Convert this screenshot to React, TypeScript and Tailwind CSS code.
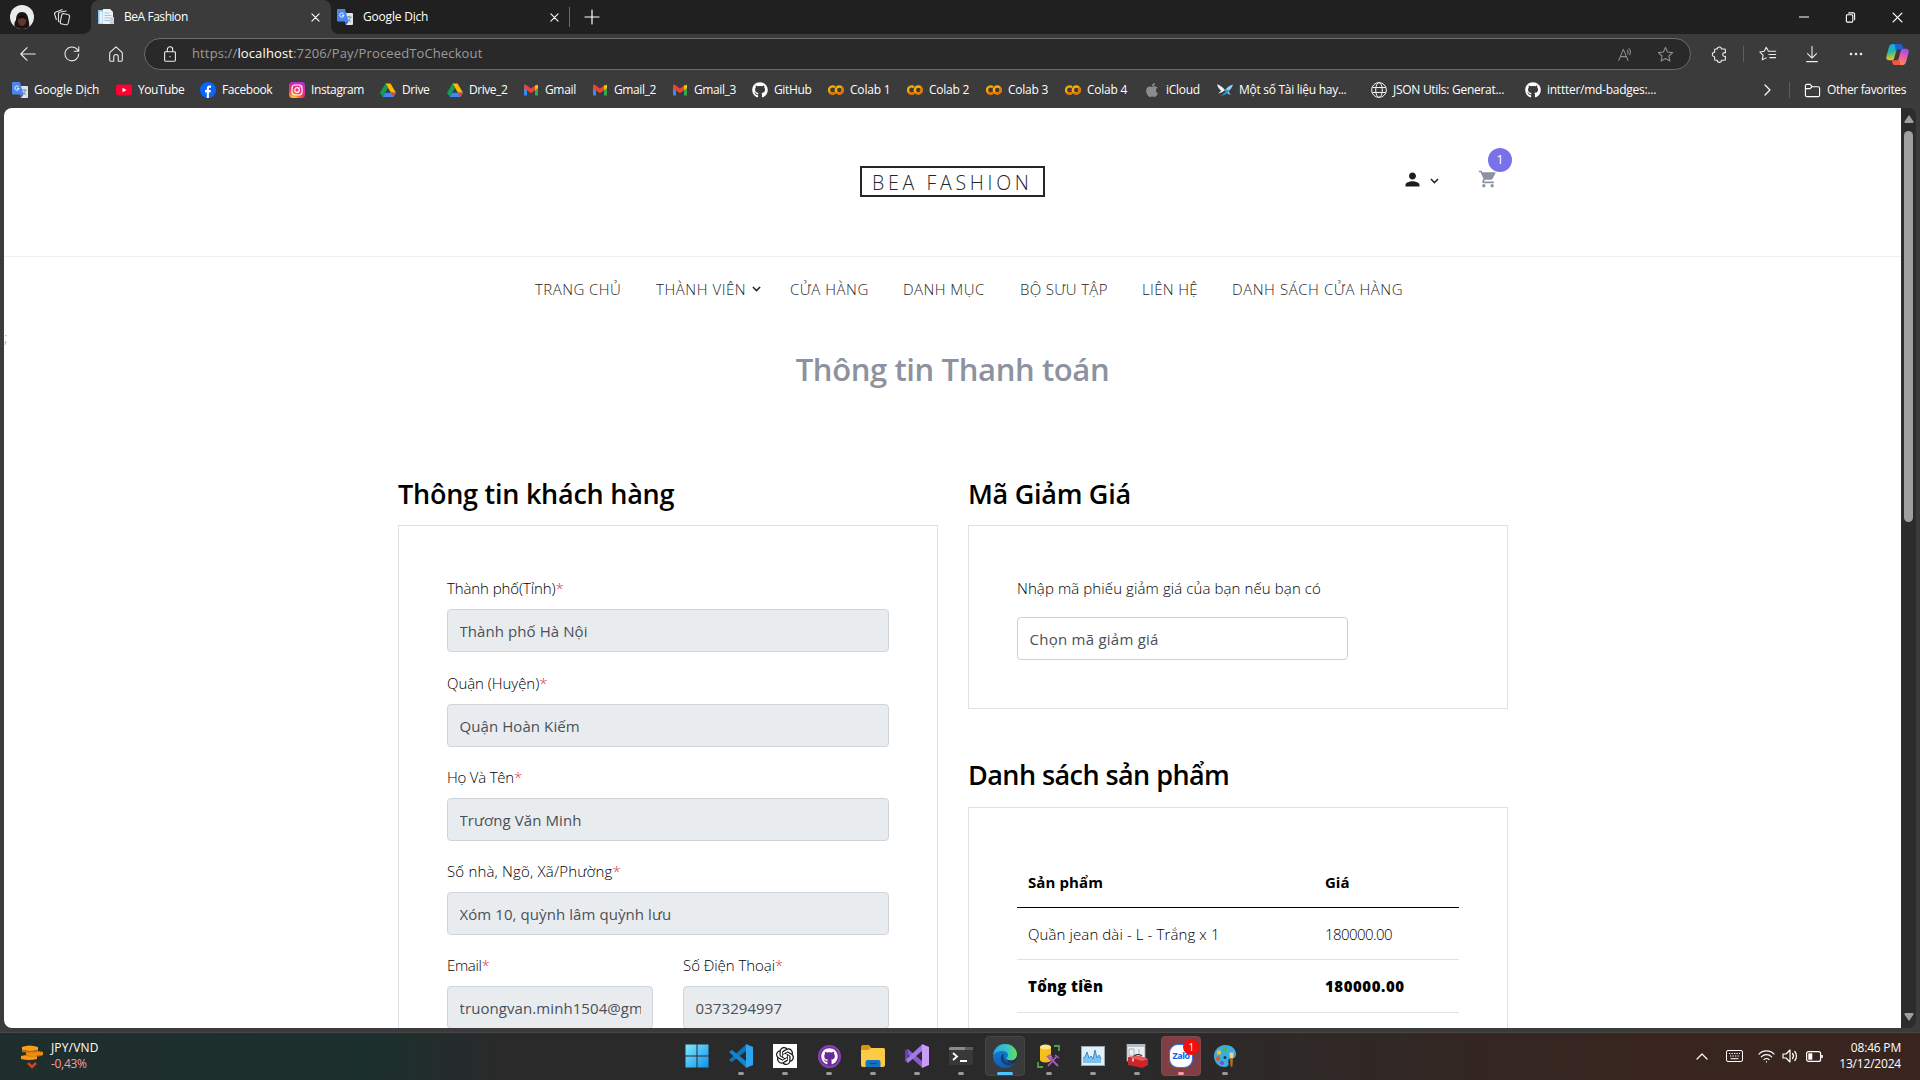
import React from "react";
import { FaApple, FaGithub } from "react-icons/fa";
import { SiOpenai } from "react-icons/si";
import { MdPerson, MdShoppingCart } from "react-icons/md";

/* ---------- small brand icons ---------- */

function TranslateIcon() {
  return (
    <svg viewBox="0 0 16 16" className="size-4 shrink-0">
      <path d="M6 4h9a1 1 0 0 1 1 1v10a1 1 0 0 1-1 1H9z" fill="#dfe3ea" />
      <path d="M9.5 8h5M12 7v1M10.5 12.500c1.500-1 2.500-2.500 3-4.500M10.500 9.500c.8 1.500 2 2.500 3.500 3" stroke="#5f7391" strokeWidth=".8" fill="none" />
      <path d="M1 0h7l3.500 12.500H1a1 1 0 0 1-1-1V1a1 1 0 0 1 1-1z" fill="#4a86ee" />
      <path d="M8 12.500h3.500L9 16z" fill="#2a56c6" />
      <path d="M6.500 4.700A2.100 2.100 0 1 0 7 6.300H5" stroke="#fff" strokeWidth="1" fill="none" />
    </svg>
  );
}
function YouTubeIcon() {
  return (
    <svg viewBox="0 0 16 16" className="size-4 shrink-0">
      <rect y="2.500" width="16" height="11" rx="2.500" fill="#ff0033" />
      <path d="M6.500 5.700v4.600L10.500 8z" fill="#fff" />
    </svg>
  );
}
function FacebookIcon() {
  return (
    <svg viewBox="0 0 16 16" className="size-4 shrink-0">
      <circle cx="8" cy="8" r="8" fill="#0866ff" />
      <path d="M6.800 16v-5.500H5V8h1.800V6.600c0-2 1-3 2.900-3 .5 0 1 .05 1.300.15v2.100h-.9c-.9 0-1.200.4-1.200 1.200V8h2l-.4 2.500H8.900V16z" fill="#fff" />
    </svg>
  );
}
function InstagramIcon() {
  return (
    <svg viewBox="0 0 16 16" className="size-4 shrink-0">
      <defs>
        <radialGradient id="ig" cx=".27" cy="1.050" r="1.100">
          <stop offset="0" stopColor="#ffdd55" />
          <stop offset=".3" stopColor="#ff7a35" />
          <stop offset=".55" stopColor="#f5306a" />
          <stop offset="1" stopColor="#b92fd0" />
        </radialGradient>
      </defs>
      <rect width="16" height="16" rx="3.500" fill="url(#ig)" />
      <rect x="3" y="3" width="10" height="10" rx="3" fill="none" stroke="#fff" strokeWidth="1.200" />
      <circle cx="8" cy="8" r="2.300" fill="none" stroke="#fff" strokeWidth="1.200" />
      <circle cx="10.900" cy="5.100" r=".7" fill="#fff" />
    </svg>
  );
}
function DriveIcon() {
  return (
    <svg viewBox="0 0 16 16" className="size-4 shrink-0">
      <path d="M5.500 1.500h5L16 10.700h-5z" fill="#ffba00" />
      <path d="M5.500 1.500 8 5.800 2.700 15 0 10.700z" fill="#0f9d58" />
      <path d="M5.300 10.700H16L13.400 15H2.700z" fill="#4285f4" />
      <path d="M11 10.700H16L13.400 15z" fill="#ea4335" />
    </svg>
  );
}
function GmailIcon() {
  return (
    <svg viewBox="0 0 16 16" className="size-4 shrink-0">
      <path d="M1 4v9.500h3V6.500z" fill="#4285f4" />
      <path d="M15 4v9.500h-3V6.500z" fill="#34a853" />
      <path d="M12 3.500 15 2.800V6l-3 2.300z" fill="#fbbc04" />
      <path d="M1 3l1.500-.6L8 6.500l4-3v4.800l-4 3-4-3L1 6z" fill="#ea4335" />
    </svg>
  );
}
function ColabIcon() {
  return (
    <svg viewBox="0 0 16 16" className="size-4 shrink-0" fill="none" strokeWidth="2.400">
      <path d="M7 5.300A3.600 3.600 0 1 0 7 10.700" stroke="#f9ab00" />
      <path d="M1.800 10.400A3.600 3.600 0 0 0 7 10.700" stroke="#e8710a" />
      <circle cx="11.300" cy="8" r="3.500" stroke="#f9ab00" />
      <path d="M8.800 10.500A3.500 3.500 0 0 0 13.800 5.500" stroke="#e8710a" />
    </svg>
  );
}
function BirdIcon() {
  return (
    <svg viewBox="0 0 16 16" className="size-4 shrink-0">
      <path d="M0 2.500c3 .5 5 2 8 5.500C6 10 4 11 1 11.500 3 10 3.500 9.500 4 8.500 2 7 .8 5 0 2.500z" fill="#e6f3fb" />
      <path d="M16 2.500c-3 .5-6 3-8 5.500 1 2.500 3 4.500 6 5-1.500-1.500-2-2.500-2.200-4C14 7 15.200 5 16 2.500z" fill="#8fd0f5" />
      <path d="M3 13.500C6 13 8.500 10.500 9.500 7L12 9c-1.500 3-5 5-9 4.500z" fill="#2196d8" />
    </svg>
  );
}
function GlobeIcon() {
  return (
    <svg viewBox="0 0 16 16" className="size-4 shrink-0" fill="none" stroke="#f0f0f0" strokeWidth="1">
      <circle cx="8" cy="8" r="7.400" />
      <ellipse cx="8" cy="8" rx="3.300" ry="7.400" />
      <path d="M1.300 5.500h13.400M1.300 10.500h13.400" />
    </svg>
  );
}
function GitHubIcon() {
  return <FaGithub className="size-4 shrink-0 text-white" />;
}
function AppleIcon() {
  return <FaApple className="size-4 shrink-0 text-[#8c8c8c]" />;
}
function PageIcon() {
  return (
    <svg viewBox="0 0 16 16" className="size-4 shrink-0">
      <path d="M0 1h10v14H0z" fill="#8cc3e8" />
      <path d="M1.500 2.500h3v12h-3z" fill="#e9f5fc" />
      <path d="M5 0h7l3 3v12H5z" fill="#eef3f6" />
      <path d="M6.500 4h5M6.500 6.500h7M6.500 9h7M6.500 11.500h7" stroke="#a3c4d9" />
      <path d="M12 8h4v7h-4z" fill="#cdd4d9" />
    </svg>
  );
}

/* ---------- browser chrome ---------- */

function Line({ d, className = "size-5 text-[#ededed]", box = "0 0 20 20" }: { d: string; className?: string; box?: string }) {
  return (
    <svg viewBox={box} className={`${className} shrink-0`} fill="none" stroke="currentColor" strokeWidth="1.200" strokeLinecap="round" strokeLinejoin="round">
      <path d={d} />
    </svg>
  );
}

const CROSS = "M1 1l8 8M9 1l-8 8";
const STAR = "M10 2.500l2.200 4.900 5.300.6-3.900 3.600 1 5.300L10 14.300l-4.600 2.600 1-5.300L2.500 8l5.300-.6z";

function TabStrip() {
  return (
    <div className="flex h-[34px] items-stretch bg-[#3b3b3b] text-[12px] text-white">
      <div className="flex w-[91px] items-center rounded-br-lg bg-[#202020] pl-[10px]">
        <svg viewBox="0 0 24 24" className="size-6 shrink-0">
          <defs>
            <clipPath id="av"><circle cx="12" cy="12" r="12" /></clipPath>
          </defs>
          <g clipPath="url(#av)">
            <rect width="24" height="24" fill="#e8eceb" />
            <path d="M5 24c-1-4-1-7 1-9 0-5 2-8 6-8s6 3 6.500 8c1 3 1 6 0 9z" fill="#1d1513" />
            <ellipse cx="12" cy="16" rx="4" ry="5" fill="#5d382c" />
            <path d="M8 13c2-3 6-3 8 0l-1 1c-2-1.500-4-1.500-6 0z" fill="#120d0d" />
          </g>
        </svg>
        <svg viewBox="0 0 18 18" className="ml-[19px] size-[18px] shrink-0 text-[#e0e0e0]" fill="none" stroke="currentColor" strokeWidth="1.100">
          <rect x="8" y="6" width="8" height="10.500" rx="2" transform="rotate(12 12 11)" />
          <path d="M6.500 14 5.500 13.500V6A2 2 0 0 1 7.500 4L13.500 3" />
          <path d="M3.500 12 1.700 6.500A2 2 0 0 1 3 4L9.500 1.500" />
        </svg>
      </div>
      <div className="flex w-[240px] items-center bg-[#202020]">
        <div className="flex h-[34px] w-[240px] items-center rounded-t-lg bg-[#3b3b3b] pr-[11px] pl-[7px]">
          <PageIcon />
          <span className="ml-[10px] flex-1 tracking-[-0.450px]">BeA Fashion</span>
          <Line d={CROSS} box="0 0 10 10" className="size-[9px]" />
        </div>
      </div>
      <div className="flex flex-1 items-stretch rounded-bl-lg bg-[#202020]">
        <div className="flex w-[238px] items-center pr-[10px] pl-[6px]">
          <TranslateIcon />
          <span className="ml-[10px] flex-1 tracking-[-0.200px]">Google Dịch</span>
          <Line d={CROSS} box="0 0 10 10" className="size-[9px]" />
        </div>
        <div className="my-[7px] w-px bg-[#6a6a6a]" />
        <div className="ml-[14px] flex flex-1 items-center">
          <Line d="M8 1v14M1 8h14" box="0 0 16 16" className="size-4" />
        </div>
        <div className="flex items-center gap-[36px] pr-[17px]">
          <Line d="M0 5h10" box="0 0 10 10" className="size-[10px]" />
          <Line d="M1 4a1 1 0 0 1 1-1h5a1 1 0 0 1 1 1v6a1 1 0 0 1-1 1H2a1 1 0 0 1-1-1zM3.500 1H8.500A1.500 1.500 0 0 1 10 2.500V8.500" box="0 0 11 12" className="size-[11px]" />
          <Line d={CROSS} box="0 0 10 10" className="size-[11px]" />
        </div>
      </div>
    </div>
  );
}

function Toolbar() {
  return (
    <div className="flex h-10 items-center pl-[19px] text-[#ededed]">
      <Line d="M18 10H2M9 3l-7 7 7 7" className="size-[18px]" />
      <Line d="M17.500 10A7.700 7.700 0 1 1 15.500 4.700L17.500 7M17.500 2v5h-5" className="ml-[26px] size-[18px]" />
      <Line d="M3 8.500 10 2l7 6.500V17a1 1 0 0 1-1 1h-3.500v-5a2.500 2.500 0 0 0-5 0v5H4a1 1 0 0 1-1-1z" className="ml-[26px] size-[18px]" />
      <div className="ml-[19px] flex h-8 w-[1547px] items-center rounded-full border border-[#6b6b6b] bg-[#292929] pr-[15px] pl-[16px]">
        <Line d="M4 8.500a1 1 0 0 1 1-1h10a1 1 0 0 1 1 1V17a1 1 0 0 1-1 1H5a1 1 0 0 1-1-1zM7 7.500V5a3 3 0 0 1 6 0v2.500M10 12.500v.5" className="size-[18px]" />
        <div className="ml-[13px] flex-1 text-[13px] tracking-[0.130px] text-[#9c9c9c]">
          https://<span className="text-white">localhost</span>:7206/Pay/ProceedToCheckout
        </div>
        <Line d="M2 17 7.500 4 13 17M4 12.500h7M12 5c1.300 1 1.300 3 .5 4.500M14 3c2 1.500 2.200 4.500 1 7.500" className="size-[17px] text-[#8d8d8d]" />
        <Line d={STAR} className="ml-[22px] size-[19px] text-[#8d8d8d]" />
      </div>
      <Line d="M7 4.500a2.300 2.300 0 0 1 4.600 0H15a1 1 0 0 1 1 1V8.700a2.100 2.100 0 1 0 0 3.800V16a1 1 0 0 1-1 1h-3.400a2.300 2.300 0 0 1-4.600 0H5a1 1 0 0 1-1-1v-3a2.300 2.300 0 0 1 0-5V5.500a1 1 0 0 1 1-1z" className="ml-[20px] size-[18px]" />
      <div className="ml-[14px] h-4 w-px bg-[#5e5e5e]" />
      <Line d="M12.500 7 10.500 7 8 2.500 5.800 7 1 7.800l3.500 3.500-.9 5.200L8 14.300M12 7h6.500M11 10.500h7.500M12 14h6.500" className="ml-[15px] size-[18px]" />
      <Line d="M10 1.500V14M5 9.500l5 5 5-5M4 18.500h12" className="ml-[26px] size-[18px]" />
      <svg viewBox="0 0 14 4" className="ml-[28px] h-1 w-[14px] shrink-0" fill="currentColor">
        <circle cx="2" cy="2" r="1.300" /><circle cx="7" cy="2" r="1.300" /><circle cx="12" cy="2" r="1.300" />
      </svg>
      <svg viewBox="0 0 24 24" className="ml-[23px] size-[23px] shrink-0">
        <defs>
          <linearGradient id="cpl" x1="0" y1="0" x2=".2" y2="1">
            <stop offset="0" stopColor="#1ea3f2" /><stop offset=".5" stopColor="#23b7b0" /><stop offset="1" stopColor="#f2c60f" />
          </linearGradient>
          <linearGradient id="cpr" x1=".6" y1="0" x2=".3" y2="1">
            <stop offset="0" stopColor="#a24bf0" /><stop offset=".5" stopColor="#ee5fa0" /><stop offset="1" stopColor="#fb9343" />
          </linearGradient>
        </defs>
        <path d="M7 1h8c-3 1-3.500 4-4.500 8l-2 7c-.5 1.500-1.500 2-3 2H3c-2.500 0-3.200-2-2.500-4.500l2.500-9C3.800 2 5 1 7 1z" fill="url(#cpl)" />
        <path d="M9 1h5c2 0 3 1 3.500 3l.7 2.500h-4.700c-2 0-2.500 1-3 3z" fill="#1f5fd8" />
        <path d="M17 23H9c3-1 3.500-4 4.500-8l2-7c.5-1.500 1.500-2 3-2H21c2.500 0 3.200 2 2.500 4.500l-2.500 9c-.8 2.500-2 3.500-4 3.500z" fill="url(#cpr)" />
        <path d="M15 23h-5c-2 0-3-1-3.500-3L6 18h4.500c2 0 2.500-1 3-3z" fill="#f0564b" />
      </svg>
    </div>
  );
}

const bookmarks: { label: string; slot: string; Icon: () => React.JSX.Element }[] = [
  { label: "Google Dịch", slot: "w-[104px] tracking-[-0.200px]", Icon: TranslateIcon },
  { label: "YouTube", slot: "w-[84px] tracking-[-0.450px]", Icon: YouTubeIcon },
  { label: "Facebook", slot: "w-[89px] tracking-[-0.400px]", Icon: FacebookIcon },
  { label: "Instagram", slot: "w-[91px] tracking-[-0.400px]", Icon: InstagramIcon },
  { label: "Drive", slot: "w-[67px] tracking-[-0.400px]", Icon: DriveIcon },
  { label: "Drive_2", slot: "w-[76px] tracking-[-0.450px]", Icon: DriveIcon },
  { label: "Gmail", slot: "w-[69px] tracking-[-0.350px]", Icon: GmailIcon },
  { label: "Gmail_2", slot: "w-[80px] tracking-[-0.400px]", Icon: GmailIcon },
  { label: "Gmail_3", slot: "w-[80px] tracking-[-0.400px]", Icon: GmailIcon },
  { label: "GitHub", slot: "w-[76px] tracking-[-0.350px]", Icon: GitHubIcon },
  { label: "Colab 1", slot: "w-[79px] tracking-[-0.200px]", Icon: ColabIcon },
  { label: "Colab 2", slot: "w-[79px] tracking-[-0.250px]", Icon: ColabIcon },
  { label: "Colab 3", slot: "w-[79px] tracking-[-0.250px]", Icon: ColabIcon },
  { label: "Colab 4", slot: "w-[79px] tracking-[-0.250px]", Icon: ColabIcon },
  { label: "iCloud", slot: "w-[73px] tracking-[-0.300px]", Icon: AppleIcon },
  { label: "Một số Tài liệu hay...", slot: "w-[154px] tracking-[-0.280px]", Icon: BirdIcon },
  { label: "JSON Utils: Generat...", slot: "w-[154px] tracking-[-0.280px]", Icon: GlobeIcon },
  { label: "inttter/md-badges:...", slot: "w-[236px] tracking-[-0.260px]", Icon: GitHubIcon },
];

function Bookmarks() {
  return (
    <div className="flex h-[34px] items-center pb-[2px] pl-3 text-[12px] whitespace-nowrap text-white">
      {bookmarks.map(({ label, slot, Icon }) => (
        <div key={label} className={`${slot} flex shrink-0 items-center gap-[6px]`}>
          <Icon />
          <span>{label}</span>
        </div>
      ))}
      <Line d="M2 1l5 5-5 5" box="0 0 8 12" className="ml-[2px] h-3 w-2" />
      <div className="ml-[18px] h-4 w-px bg-[#5e5e5e]" />
      <Line d="M1.500 4a1.500 1.500 0 0 1 1.500-1.500h3.500L8.500 5H15a1.500 1.500 0 0 1 1.500 1.500V14a1.500 1.500 0 0 1-1.500 1.500H3A1.500 1.500 0 0 1 1.500 14zM1.500 7H6.500L8.500 5" box="0 0 18 18" className="ml-[14px] size-[17px]" />
      <span className="ml-[6px] tracking-[-0.350px]">Other favorites</span>
    </div>
  );
}

/* ---------- shop page ---------- */

function Caret() {
  return (
    <svg viewBox="0 0 10 6" className="h-[6px] w-[9px]" fill="none" stroke="#25262a" strokeWidth="1.700">
      <path d="M1 .8 5 4.800 9 .8" />
    </svg>
  );
}

const nav = [
  { label: "TRANG CHỦ", slot: "w-[121px] tracking-[0.450px]" },
  { label: "THÀNH VIÊN", slot: "w-[134px] tracking-[0.550px]", caret: true },
  { label: "CỬA HÀNG", slot: "w-[113px] tracking-[0.500px]" },
  { label: "DANH MỤC", slot: "w-[117px] tracking-[0.450px]" },
  { label: "BỘ SƯU TẬP", slot: "w-[122px] tracking-[0.350px]" },
  { label: "LIÊN HỆ", slot: "w-[90px] tracking-[0.350px]" },
  { label: "DANH SÁCH CỬA HÀNG", slot: "w-[171px] tracking-[0.560px]" },
];

function Field({ label, value, fit = "tracking-[-0.050px]" }: { label: string; value: string; fit?: string }) {
  return (
    <div className="mb-[22.300px] min-w-0 flex-1">
      <div className={`mb-[13px] h-4 text-[15px] leading-4 font-light whitespace-nowrap text-black ${fit}`}>
        {label}
        <span className="text-[#dc3545]">*</span>
      </div>
      <div className="h-[43px] rounded-[4px] border border-[#ced4da] bg-[#e9ecef] px-[11.500px] text-[15px] leading-[43px] tracking-[0.080px] text-[#495057]">
        <div className="overflow-hidden whitespace-nowrap">{value}</div>
      </div>
    </div>
  );
}

function Heading({ children, fit }: { children: string; fit: string }) {
  return <h2 className={`text-[27px] leading-8 font-semibold text-black ${fit}`}>{children}</h2>;
}

function Shop() {
  return (
    <div className="h-full flex-1 overflow-hidden bg-white">
      <div className="flex h-[149px] border-b border-[#f0f0f2]">
        <div className="w-[856px]" />
        <div className="mt-[58px] h-[31px] w-[185px] border-2 border-[#25262a] pl-[10px] text-[19.500px] leading-[29px] font-light tracking-[3.700px] whitespace-nowrap text-[#25262a]">
          BEA FASHION
        </div>
        <div className="mt-[61px] ml-[357px] flex h-5 items-center">
          <MdPerson className="size-[21px] text-[#1c1d20]" />
          <div className="ml-[7px] pt-[3px]"><Caret /></div>
          <div className="relative ml-[39px]">
            <MdShoppingCart className="size-[20px] text-[#8c92a0]" />
            <span className="absolute -top-[21px] left-[10px] flex size-6 items-center justify-center rounded-full bg-[#7971ea] text-[13px] text-white">1</span>
          </div>
        </div>
      </div>
      <div className="flex pt-[22px] pl-[531px] text-[15px] leading-5 font-light whitespace-nowrap text-[#25262a]">
        {nav.map((n) => (
          <div key={n.label} className={`${n.slot} flex shrink-0 items-center gap-[6px]`}>
            {n.label}
            {n.caret && <Caret />}
          </div>
        ))}
      </div>
      <div className="h-[34px] pt-[28px] text-[15px] leading-5 font-light text-[#8c92a0]">;</div>
      <h1 className="mt-[16px] text-center text-[31px] leading-10 font-semibold tracking-[-0.380px] text-[#8c92a0]">Thông tin Thanh toán</h1>
      <div className="mt-[89px] flex gap-[30px] pl-[394px]">
        <div className="w-[540px]">
          <Heading fit="tracking-[-0.250px]">Thông tin khách hàng</Heading>
          <div className="mt-[15px] border border-[#dee2e6] px-12 pt-[54.300px] pb-20">
            <Field label="Thành phố(Tỉnh)" value="Thành phố Hà Nội" fit="tracking-[-0.100px]" />
            <Field label="Quận (Huyện)" value="Quận Hoàn Kiếm" fit="tracking-[-0.050px]" />
            <Field label="Họ Và Tên" value="Trương Văn Minh" fit="tracking-[-0.220px]" />
            <Field label="Số nhà, Ngõ, Xã/Phường" value="Xóm 10, quỳnh lâm quỳnh lưu" fit="tracking-[0.180px]" />
            <div className="flex gap-[30px]">
              <Field label="Email" value="truongvan.minh1504@gmail.com" fit="tracking-[-0.350px]" />
              <Field label="Số Điện Thoại" value="0373294997" fit="tracking-[-0.050px]" />
            </div>
          </div>
        </div>
        <div className="w-[540px]">
          <Heading fit="tracking-[-0.280px]">Mã Giảm Giá</Heading>
          <div className="mt-[15px] h-[184px] border border-[#dee2e6] px-12 pt-[50px]">
            <div className="text-[15px] leading-6 font-light tracking-[0.100px] text-black">Nhập mã phiếu giảm giá của bạn nếu bạn có</div>
            <div className="mt-[17px] h-[43px] w-[331px] rounded-[4px] border border-[#ced0d4] px-[11.500px] text-[15px] leading-[43px] tracking-[0.250px] text-[#495057]">Chọn mã giảm giá</div>
          </div>
          <div className="mt-[50px]"><Heading fit="tracking-[-0.570px]">Danh sách sản phẩm</Heading></div>
          <div className="mt-[16px] h-[400px] border border-[#dee2e6] px-12 pt-12">
            <div className="flex h-[52px] items-center border-b border-black pt-px pl-[11px] text-[15px] font-bold text-black">
              <span className="w-[297px] tracking-[0.100px]">Sản phẩm</span>
              <span>Giá</span>
            </div>
            <div className="flex h-[52px] items-center border-b border-[#dee2e6] pt-px pl-[11px] text-[15px] font-light tracking-[0.100px] text-black">
              <span className="w-[297px]">Quần jean dài - L - Trắng x 1</span>
              <span className="tracking-[-0.550px]">180000.00</span>
            </div>
            <div className="flex h-[53px] items-center border-b border-[#dee2e6] pl-[11px] text-[15px] font-extrabold text-black">
              <span className="w-[297px] tracking-[0.300px]">Tổng tiền</span>
              <span className="tracking-[0.550px]">180000.00</span>
            </div>
          </div>
        </div>
      </div>
    </div>
  );
}

function Scrollbar() {
  return (
    <div className="flex w-[15px] flex-col items-center bg-[#2c2c2c] py-[7px] text-[#9f9f9f]">
      <svg viewBox="0 0 10 8" className="h-2 w-[10px] shrink-0" fill="currentColor"><path d="M5 0l4.500 6.500q.3 1.500-1 1.500h-7q-1.300 0-1-1.500z" /></svg>
      <div className="mt-[8px] h-[391px] w-[9px] rounded-full bg-[#9f9f9f]" />
      <div className="flex-1" />
      <svg viewBox="0 0 10 8" className="h-2 w-[10px] shrink-0" fill="currentColor"><path d="M5 8l4.500-6.500Q9.800 0 8.500 0h-7Q.2 0 .5 1.500z" /></svg>
    </div>
  );
}

/* ---------- taskbar ---------- */

function WindowsIcon() {
  return (
    <svg viewBox="0 0 24 24" className="size-6">
      <defs><linearGradient id="win" x1="0" y1="0" x2="1" y2="1"><stop offset="0" stopColor="#7fe9fd" /><stop offset="1" stopColor="#1090ee" /></linearGradient></defs>
      <path d="M.5.500h11v11H.5zM12.500.500h11v11h-11zM.5 12.500h11v11H.5zM12.500 12.500h11v11h-11z" fill="url(#win)" />
    </svg>
  );
}
function CodeIcon() {
  return (
    <svg viewBox="0 0 24 24" className="size-6">
      <path d="M17.500 6.500 3 18 0 16 17 .500z" fill="#0f72bb" />
      <path d="M17.500 17.500 3 6 0 8l17 15.500z" fill="#1585cc" />
      <path d="M17 0l7 3v18l-7 3z" fill="#2ba5ee" />
    </svg>
  );
}
function GptIcon() {
  return (
    <div className="flex size-6 items-center justify-center bg-white"><SiOpenai className="size-[18px] text-[#111]" /></div>
  );
}
function GhDesktopIcon() {
  return (
    <div className="flex size-[23px] items-center justify-center rounded-full border-2 border-[#8a3fb4] bg-[#6a2796]"><FaGithub className="size-[17px] text-white" /></div>
  );
}
function FolderIcon() {
  return (
    <svg viewBox="0 0 24 24" className="size-6">
      <path d="M0 3a2 2 0 0 1 2-2h6l2.500 3H22a2 2 0 0 1 2 2v4H0z" fill="#d9930f" />
      <path d="M0 6h7l3-2h12a2 2 0 0 1 2 2v15a2 2 0 0 1-2 2H2a2 2 0 0 1-2-2z" fill="#fccb45" />
      <path d="M4.500 23v-5a2 2 0 0 1 2-2h11a2 2 0 0 1 2 2v5z" fill="#1476c2" />
      <path d="M8 19.500h8" stroke="#0b4f8e" strokeWidth="1.500" />
    </svg>
  );
}
function VisualStudioIcon() {
  return (
    <svg viewBox="0 0 24 24" className="size-6">
      <path d="M0 6.500 3 5l14.500 12.500V24L0 8z" fill="#8a5bd0" />
      <path d="M0 6.500 3 5v14l-3-1.500z" fill="#6a3fae" />
      <path d="M3 19 17.500 6.500V0L1 15.500z" fill="#a777e8" />
      <path d="M17 0l7 3v18l-7 3z" fill="#c89cf8" />
    </svg>
  );
}
function TerminalIcon() {
  return (
    <svg viewBox="0 0 24 24" className="size-6">
      <rect y="3" width="24" height="18" rx="1.500" fill="#383838" />
      <path d="M0 6V4.500A1.500 1.500 0 0 1 1.500 3h21A1.500 1.500 0 0 1 24 4.500V6z" fill="#8b8b8b" />
      <path d="M16 3h6.500A1.500 1.500 0 0 1 24 4.500V6h-8z" fill="#5c5c5c" />
      <path d="M4 9l4 3.500L4 16M11 17h7" stroke="#fff" strokeWidth="1.800" fill="none" />
    </svg>
  );
}
function EdgeIcon() {
  return (
    <svg viewBox="0 0 24 24" className="size-6">
      <defs>
        <linearGradient id="e1" x1="0" y1=".4" x2="1" y2=".4"><stop offset="0" stopColor="#2aa5ea" /><stop offset=".6" stopColor="#35c6c4" /><stop offset="1" stopColor="#6be04c" /></linearGradient>
        <linearGradient id="e2" x1="0" y1="0" x2="0" y2="1"><stop offset="0" stopColor="#1787d8" /><stop offset="1" stopColor="#0f5cb4" /></linearGradient>
      </defs>
      <circle cx="12" cy="12" r="12" fill="url(#e2)" />
      <path d="M.2 11C1 4.500 6 0 12 0c7 0 12 5 12 10.500 0 3.500-2.500 6-6 6-3 0-4.500-1-4.500-2s1.500-1.500 1.500-3.500S13 7 9.500 7C5 7 1.500 9 .2 11z" fill="url(#e1)" />
      <path d="M10.500 9.500c-2 1-3 3-2.500 6 .6 3.500 4 6 8 6 3 0 5.500-1.500 6.500-3.500-5 2.500-12 .5-12-5 0-1.500.5-3 0-3.500z" fill="#13406f" />
      <path d="M13.500 14.500c0 1 1.500 2 4.500 2 3.500 0 6-2.500 6-6 0 4 0 6-1.800 7.800C18 20 13 18 13.500 14.500z" fill="#2b2f33" />
    </svg>
  );
}
function DatabaseIcon() {
  return (
    <svg viewBox="0 0 24 24" className="size-6">
      <path d="M3 3v13c0 1.500 2.500 2.500 5.500 2.500S14 17.500 14 16V3z" fill="#f5bf22" />
      <ellipse cx="8.500" cy="3" rx="5.500" ry="2.500" fill="#ffe48a" />
      <path d="M17 2h5v5M1 18v5h5" stroke="#4fa04b" strokeWidth="1.800" fill="none" />
      <path d="M12 13l9 9M20 12 11 22" stroke="#a558c8" strokeWidth="1.800" />
      <path d="M10.500 12.500l3-1.500 1.500 3-2 1.500zM18 11l4 3" stroke="#a558c8" strokeWidth="1.500" fill="none" />
    </svg>
  );
}
function MonitorIcon() {
  return (
    <svg viewBox="0 0 24 24" className="size-6">
      <rect x=".5" y="2.500" width="23" height="19" fill="#e4eef5" stroke="#9aa8b3" />
      <path d="M2 19v-5l2-1 2-5 2 6 2-2 2 3 2-9 2 8 2-3 2 4v4z" fill="#7cc3ef" />
      <path d="M2 14l2-1 2-5 2 6 2-2 2 3 2-9 2 8 2-3 2 4" fill="none" stroke="#2b84c4" strokeWidth=".9" />
    </svg>
  );
}
function ToolboxIcon() {
  return (
    <svg viewBox="0 0 24 24" className="size-6">
      <rect x="2" y="0" width="18" height="17" fill="#eceff1" stroke="#9aa0a6" strokeWidth=".8" />
      <path d="M2 0h18v3H2z" fill="#b4bcc4" />
      <path d="M4 5h5v7H4zM14 5v6" stroke="#a9b1b8" fill="none" />
      <path d="M9 13c0-3 7-3 8-1" stroke="#333" strokeWidth="1.300" fill="none" />
      <path d="M3 13l12-1 8 3v6l-6 3-14-3z" fill="#c9252b" />
      <path d="M3 13l12-1 8 3-6 2z" fill="#ea5a54" />
      <path d="M8 14.500v3" stroke="#eee" strokeWidth="1.500" />
    </svg>
  );
}
function ZaloIcon() {
  return (
    <div className="relative flex size-6 items-center justify-center rounded-[9px] border border-[#2b78f5] bg-white text-[9px] font-bold tracking-[-0.500px] text-[#0b63e5]">
      Zalo
      <span className="absolute -top-[6px] left-[13px] flex size-4 items-center justify-center rounded-full bg-[#f80d0d] text-[10px] font-normal text-white">1</span>
    </div>
  );
}
function PaintIcon() {
  return (
    <svg viewBox="0 0 24 24" className="size-6">
      <path d="M12 1c7 0 11 4 11 9 0 4-3 5-6 5-2 0-2 2-1.500 4 .5 2-1 4-4 4C5 23 1 18 1 12S6 1 12 1z" fill="#38aee3" />
      <circle cx="6" cy="8.500" r="2.200" fill="#f6c21c" /><circle cx="12" cy="5" r="2.200" fill="#4fb54c" />
      <circle cx="5" cy="14.500" r="2.200" fill="#e5532d" /><circle cx="9" cy="19" r="2" fill="#8547b9" /><circle cx="12" cy="13.500" r="1.500" fill="#123a55" />
      <path d="M16.500 8.500h4l-.5 6h-3z" fill="#f2d08c" /><path d="M17 14h3l-.5 8q-1 2-2 0z" fill="#b86a2c" />
    </svg>
  );
}

const apps: { id: string; Icon: () => React.JSX.Element; tile?: string; mark?: string }[] = [
  { id: "start", Icon: WindowsIcon, mark: "w-0" },
  { id: "code", Icon: CodeIcon },
  { id: "gpt", Icon: GptIcon },
  { id: "github", Icon: GhDesktopIcon },
  { id: "files", Icon: FolderIcon },
  { id: "vs", Icon: VisualStudioIcon },
  { id: "terminal", Icon: TerminalIcon },
  { id: "edge", Icon: EdgeIcon, tile: "border-[#454545] bg-[#3a3a3a]", mark: "w-4 bg-[#4cc2ff]" },
  { id: "sql", Icon: DatabaseIcon },
  { id: "perf", Icon: MonitorIcon },
  { id: "tools", Icon: ToolboxIcon },
  { id: "zalo", Icon: ZaloIcon, tile: "border-[#85454a] bg-[#7f3f45]", mark: "w-[6px] bg-[#ff99a4]" },
  { id: "paint", Icon: PaintIcon },
];

function Taskbar() {
  return (
    <div className="flex h-12 items-start border-t border-[#474747] bg-linear-to-r from-[#2a2a2a] from-60% to-[#38251f] to-85%">
      <div className="flex h-[47px] w-[675px] items-center bg-linear-to-r from-[#1f2e2c] from-0% via-[#1c302e] via-55% to-transparent to-75% pb-[3px] pl-[18px]">
        <svg viewBox="0 0 24 28" className="mt-[4px] size-7">
          <path d="M2 4q7-3 16 0v3Q10 9 2 7z" fill="#f99d1c" />
          <path d="M6 9q9-2 17 0v3q-8 2-17 0z" fill="#f08a10" />
          <path d="M1 13q8-2 16 0v3q-8 2-16 0z" fill="#f79a1a" />
          <path d="M2 7q8 2 16 0v2q-8 1-16 0zM6 12q8 2 16 0v1q-8 1-16 0z" fill="#c96a08" />
          <path d="M8 20l4 4 4-4" stroke="#d6421e" strokeWidth="2.600" fill="none" />
        </svg>
        <div className="ml-[5px] pt-[1px] text-[12px] leading-4">
          <div className="tracking-[0.150px] text-white">JPY/VND</div>
          <div className="tracking-[-0.300px] text-[#ff99a4]">-0,43%</div>
        </div>
      </div>
      {apps.map(({ id, Icon, tile = "border-transparent", mark = "w-[6px] bg-[#9a9a9a]" }) => (
        <div key={id} className={`mx-[2px] mt-[3px] flex h-10 w-10 shrink-0 flex-col items-center rounded-[4px] border pt-[7px] ${tile}`}>
          <div className="flex h-6 items-center"><Icon /></div>
          <div className={`mt-[4px] h-[3px] shrink-0 rounded-full ${mark}`} />
        </div>
      ))}
      <div className="flex h-[46px] flex-1 items-center justify-end pr-[19px] text-white">
        <Line d="M1 7l5-5 5 5" box="0 0 12 9" className="h-[9px] w-3" />
        <svg viewBox="0 0 17 12" className="ml-[18px] h-3 w-[17px]" fill="none" stroke="currentColor">
          <rect x=".5" y=".5" width="16" height="11" rx="1.500" />
          <path d="M3 3.500h11M4 6h9" strokeDasharray="1.300 1.200" /><path d="M4.500 8.700h8" />
        </svg>
        <Line d="M1 5c4-4.500 12-4.500 16 0M3.500 8c3-3.200 8-3.200 11 0M6.300 10.800c1.500-1.600 4-1.600 5.400 0M9 13v.3" box="0 0 18 14" className="ml-[15px] h-[14px] w-[17px]" />
        <Line d="M1 5h3l4-4v12L4 9H1zM10.500 4.500c1.300 1.500 1.300 3.500 0 5M12.800 2.500c2.200 2.500 2.200 6.500 0 9" box="0 0 17 14" className="ml-[7px] h-[14px] w-[17px]" />
        <svg viewBox="0 0 17 11" className="ml-[7px] h-[11px] w-[17px]" fill="none" stroke="currentColor">
          <rect x=".6" y=".6" width="14" height="9.800" rx="2" strokeWidth="1.200" />
          <rect x="2.300" y="2.300" width="4" height="6.400" fill="currentColor" stroke="none" /><path d="M16 4v3" strokeWidth="1.600" />
        </svg>
        <div className="ml-[16px] text-right text-[12px] leading-4 tracking-[-0.200px]">
          <div>08:46 PM</div>
          <div>13/12/2024</div>
        </div>
      </div>
    </div>
  );
}

export default function App() {
  return (
    <div className="flex h-[1080px] w-[1920px] flex-col overflow-hidden bg-[#3b3b3b] font-['Open_Sans','Noto_Sans',sans-serif]">
      <TabStrip />
      <Toolbar />
      <Bookmarks />
      <div className="mx-1 flex h-[920px] shrink-0 overflow-hidden rounded-lg">
        <Shop />
        <Scrollbar />
      </div>
      <div className="h-1 shrink-0" />
      <Taskbar />
    </div>
  );
}
